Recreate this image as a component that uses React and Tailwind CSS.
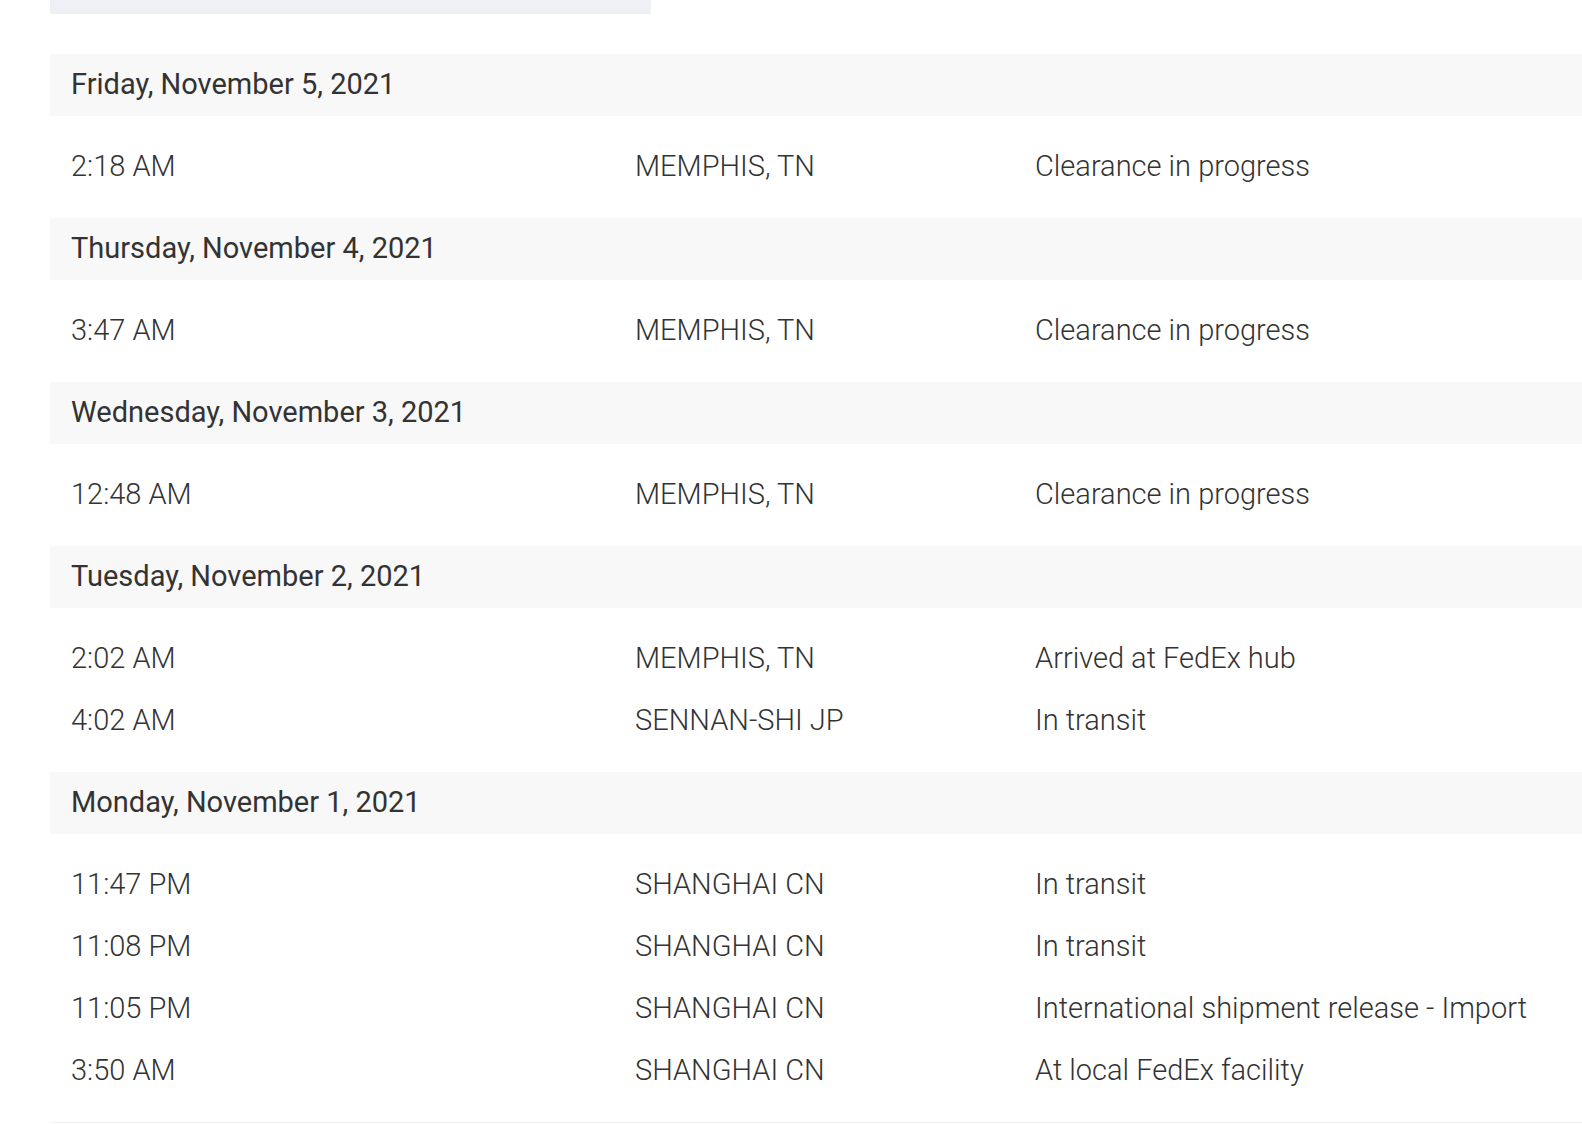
export default function App() {
  const groups = [
    { date: "Friday, November 5, 2021", rows: [["2:18 AM", "MEMPHIS, TN", "Clearance in progress"]] },
    { date: "Thursday, November 4, 2021", rows: [["3:47 AM", "MEMPHIS, TN", "Clearance in progress"]] },
    { date: "Wednesday, November 3, 2021", rows: [["12:48 AM", "MEMPHIS, TN", "Clearance in progress"]] },
    {
      date: "Tuesday, November 2, 2021",
      rows: [
        ["2:02 AM", "MEMPHIS, TN", "Arrived at FedEx hub"],
        ["4:02 AM", "SENNAN-SHI JP", "In transit"],
      ],
    },
    {
      date: "Monday, November 1, 2021",
      rows: [
        ["11:47 PM", "SHANGHAI CN", "In transit"],
        ["11:08 PM", "SHANGHAI CN", "In transit"],
        ["11:05 PM", "SHANGHAI CN", "International shipment release - Import"],
        ["3:50 AM", "SHANGHAI CN", "At local FedEx facility"],
      ],
    },
  ];
  return (
    <div className="w-[1582px] h-[1124px] overflow-hidden bg-white pl-[50px] text-[#333]" style={{ fontFamily: "Roboto, 'Liberation Sans', sans-serif" }}>
      <div className="w-[601px] h-[14px] bg-[#eff0f5]" />
      <div className="mt-[40px] w-[1532px] border-b border-[#f2f2f2]">
        {groups.map((g) => (
          <div key={g.date}>
            <div className="h-[62px] bg-[#f8f8f8] flex items-center pl-[21px] text-[29px] font-normal text-[#333]">{g.date}</div>
            <div className="py-[20px]">
              {g.rows.map((r, i) => (
                <div key={i} className="h-[62px] grid grid-cols-[564px_400px_1fr] items-center pl-[21px] text-[29px] font-light">
                  <div>{r[0]}</div>
                  <div>{r[1]}</div>
                  <div>{r[2]}</div>
                </div>
              ))}
            </div>
          </div>
        ))}
      </div>
    </div>
  );
}
